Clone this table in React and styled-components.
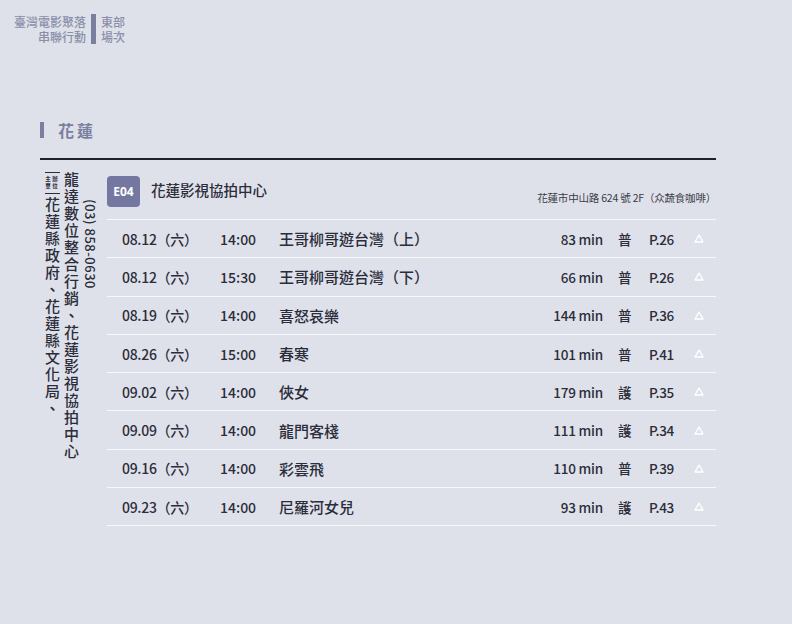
import styled, { createGlobalStyle } from 'styled-components';

const GlobalStyle = createGlobalStyle`
    html, body {
        margin: 0;
        padding: 0;
        background-color: #dfe1ea;
    }
    body {
        font-family: "Noto Sans CJK TC", "Noto Sans", sans-serif;
        color: #2b2d3a;
    }
    #root {
        min-height: 624px;
    }
`;

const Page = styled.div`
    padding-top: 14px;
`;

const Brand = styled.div`
    display: flex;
    align-items: stretch;
    font-size: 12px;
    line-height: 15px;
    font-weight: 500;
    color: #8a8fa9;
`;

const BrandLeft = styled.div`
    width: 86px;
    text-align: right;
`;

const BrandBar = styled.div`
    width: 5px;
    margin: 0 5px;
    background-color: #7a7e9f;
`;

const SectionTitle = styled.h2`
    display: flex;
    align-items: center;
    gap: 14px;
    margin: 78px 0 0 40px;
    height: 16px;
    font-size: 16px;
    font-weight: 700;
    letter-spacing: 3px;
    color: #7a7e9f;

    &::before {
        content: '';
        width: 4px;
        height: 16px;
        background-color: #7a7e9f;
    }
`;

const Panel = styled.div`
    display: flex;
    width: 676px;
    margin: 20px 0 0 40px;
    border-top: 2px solid #1d1f2c;
`;

const Sponsor = styled.div`
    display: flex;
    gap: 3px;
    width: 67px;
    padding: 12px 0 0 4px;
    box-sizing: border-box;
`;

const SponsorCol = styled.div`
    display: flex;
    flex-direction: column;
    align-items: center;
`;

const Label = styled.div`
    display: grid;
    grid-template-columns: 7px 7px;
    width: 15px;
    padding: 3px 0;
    border-top: 1.5px solid #2b2d3a;
    border-bottom: 1.5px solid #2b2d3a;
    margin-bottom: 3px;
    font-size: 5.5px;
    line-height: 7px;
    text-align: center;
    font-weight: 700;
`;

const Vertical = styled.div`
    writing-mode: vertical-rl;
    font-size: ${({ small }) => (small ? '13px' : '15px')};
    letter-spacing: ${({ small }) => (small ? '0.5px' : '2px')};
    line-height: 16px;
    font-weight: 500;
    margin-top: ${({ offset }) => offset || 0}px;
`;

const Table = styled.div`
    flex: 1;
`;

const Head = styled.div`
    display: flex;
    align-items: center;
    box-sizing: border-box;
    height: 60px;
    border-bottom: 1px solid #f7f8fb;
`;

const Badge = styled.div`
    display: flex;
    align-items: center;
    justify-content: center;
    width: 33px;
    height: 31px;
    margin-top: 4px;
    border-radius: 4px;
    background-color: #7478a0;
    color: #ffffff;
    font-family: "Noto Sans", sans-serif;
    font-size: 12px;
    font-weight: 700;
`;

const Venue = styled.div`
    margin-left: 11px;
    font-size: 14.5px;
    font-weight: 500;
`;

const Address = styled.div`
    margin-left: auto;
    align-self: flex-end;
    padding-bottom: 14px;
    font-size: 10.5px;
    letter-spacing: -0.2px;
    color: #3a3c48;
`;

const Row = styled.div`
    display: grid;
    grid-template-columns: 98px 59px 1fr auto 31px 45px 22px;
    align-items: center;
    box-sizing: border-box;
    height: 38.3px;
    padding-left: 15px;
    border-bottom: 1px solid #f7f8fb;
    font-size: 14px;
    font-weight: 500;
`;

const DateCell = styled.span`
    letter-spacing: -0.3px;
`;

const Title = styled.span`
    font-size: 15px;
`;

const Min = styled.span`
    margin-right: 15px;
    font-size: 13.5px;
    letter-spacing: -0.2px;
`;

const Rating = styled.span`
    font-size: 13.5px;
`;

const PageNo = styled.span`
    font-size: 13.5px;
    letter-spacing: -0.4px;
`;

const Tri = styled.svg`
    display: block;
    width: 10px;
    height: 9px;
`;

const rows = [
    ['08.12', '14:00', '王哥柳哥遊台灣（上）', 83, '普', 'P.26'],
    ['08.12', '15:30', '王哥柳哥遊台灣（下）', 66, '普', 'P.26'],
    ['08.19', '14:00', '喜怒哀樂', 144, '普', 'P.36'],
    ['08.26', '15:00', '春寒', 101, '普', 'P.41'],
    ['09.02', '14:00', '俠女', 179, '護', 'P.35'],
    ['09.09', '14:00', '龍門客棧', 111, '護', 'P.34'],
    ['09.16', '14:00', '彩雲飛', 110, '普', 'P.39'],
    ['09.23', '14:00', '尼羅河女兒', 93, '護', 'P.43'],
];

export default function App() {
    return (
        <Page>
            <GlobalStyle />
            <Brand>
                <BrandLeft>
                    <div>臺灣電影聚落</div>
                    <div>串聯行動</div>
                </BrandLeft>
                <BrandBar />
                <div>
                    <div>東部</div>
                    <div>場次</div>
                </div>
            </Brand>

            <SectionTitle>花蓮</SectionTitle>

            <Panel>
                <Sponsor>
                    <SponsorCol>
                        <Label>
                            <span>主</span><span>辦</span>
                            <span>單</span><span>位</span>
                        </Label>
                        <Vertical>花蓮縣政府、花蓮縣文化局、</Vertical>
                    </SponsorCol>
                    <SponsorCol>
                        <Vertical>龍達數位整合行銷、花蓮影視協拍中心</Vertical>
                    </SponsorCol>
                    <SponsorCol>
                        <Vertical small offset={27}>(03) 858-0630</Vertical>
                    </SponsorCol>
                </Sponsor>

                <Table>
                    <Head>
                        <Badge>E04</Badge>
                        <Venue>花蓮影視協拍中心</Venue>
                        <Address>花蓮市中山路 624 號 2F（众蔬食咖啡）</Address>
                    </Head>
                    {rows.map(([date, time, title, min, rating, page], i) => (
                        <Row key={i}>
                            <DateCell>{date}（六）</DateCell>
                            <span>{time}</span>
                            <Title>{title}</Title>
                            <Min>{min} min</Min>
                            <Rating>{rating}</Rating>
                            <PageNo>{page}</PageNo>
                            <Tri viewBox="0 0 10 9">
                                <path d="M5 1 L9 8 L1 8 Z" fill="none" stroke="#ffffff" strokeWidth="1.4" strokeLinejoin="round" />
                            </Tri>
                        </Row>
                    ))}
                </Table>
            </Panel>
        </Page>
    );
}
